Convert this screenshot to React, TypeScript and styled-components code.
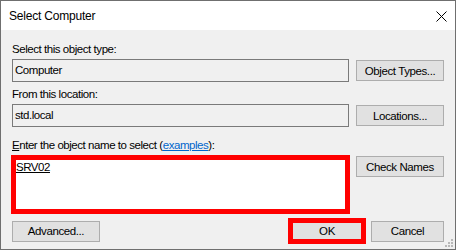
import React from 'react';
import styled, { createGlobalStyle } from 'styled-components';

const GlobalStyle = createGlobalStyle`
  html, body {
    margin: 0;
    padding: 0;
    background: #ffffff;
  }
  body {
    font-family: "Liberation Sans", Arial, sans-serif;
    font-size: 11.5px;
    color: #000;
  }
`;

const App: React.FC = () => {
  return (
    <>
      <GlobalStyle />
      <Window>
        <TitleBar>
          <Title>Select Computer</Title>
          <CloseGlyph width="11" height="11" viewBox="0 0 11 11">
            <path d="M0.5 0.5 L10.5 10.5 M10.5 0.5 L0.5 10.5" stroke="#000" strokeWidth="1" fill="none" />
          </CloseGlyph>
        </TitleBar>

        <Body>
          <Label $top={12}>Select this object type:</Label>
          <Row>
            <TextBox>Computer</TextBox>
            <Button>Object Types...</Button>
          </Row>

          <Label $top={5}>From this location:</Label>
          <Row>
            <TextBox>std.local</TextBox>
            <Button>Locations...</Button>
          </Row>

          <Label $top={11}>
            <u>E</u>nter the object name to select (<Link>examples</Link>):
          </Label>
          <Row $top>
            <NameBox>
              <NameText>SRV02</NameText>
            </NameBox>
            <Button $nudge>Check Names</Button>
          </Row>

          <Footer>
            <Button>Advanced...</Button>
            <FooterRight>
              <Highlight>
                <OkButton>OK</OkButton>
              </Highlight>
              <Button $width={73}>Cancel</Button>
            </FooterRight>
          </Footer>

          <Grip width="9" height="9" viewBox="0 0 9 9">
            <rect x="6" y="0" width="2" height="2" fill="#b8b8b8" />
            <rect x="3" y="3" width="2" height="2" fill="#b8b8b8" />
            <rect x="6" y="3" width="2" height="2" fill="#b8b8b8" />
            <rect x="0" y="6" width="2" height="2" fill="#b8b8b8" />
            <rect x="3" y="6" width="2" height="2" fill="#b8b8b8" />
            <rect x="6" y="6" width="2" height="2" fill="#b8b8b8" />
          </Grip>
        </Body>
      </Window>
    </>
  );
};

const Window = styled.div`
  width: 456px;
  height: 250px;
  box-sizing: border-box;
  border: 1px solid #6f6f6f;
  display: flex;
  flex-direction: column;
  background: #f0f0f0;
`;

const TitleBar = styled.div`
  height: 29px;
  background: #ffffff;
  display: flex;
  align-items: center;
  justify-content: space-between;
  padding: 0 8px 0 8px;
  flex-shrink: 0;
`;

const Title = styled.span`
  font-size: 12px;
  letter-spacing: -0.2px;
  margin-top: 1px;
`;

const CloseGlyph = styled.svg`
  display: block;
  margin-top: 1px;
`;

const Body = styled.div`
  position: relative;
  flex: 1;
  padding: 0 11px;
  display: flex;
  flex-direction: column;
`;

const Label = styled.div<{ $top: number }>`
  margin-top: ${(p) => p.$top}px;
  height: 15px;
  line-height: 15px;
  margin-bottom: 2px;
  letter-spacing: -0.45px;
  white-space: nowrap;
`;

const Link = styled.span`
  color: #0066cc;
  text-decoration: underline;
`;

const Row = styled.div<{ $top?: boolean }>`
  display: grid;
  grid-template-columns: 337px 88px;
  column-gap: 7px;
  align-items: ${(p) => (p.$top ? 'start' : 'center')};
`;

const TextBox = styled.div`
  height: 23px;
  box-sizing: border-box;
  border: 1px solid #7a7a7a;
  background: #f0f0f0;
  padding: 0 2px;
  line-height: 21px;
  letter-spacing: -0.45px;
`;

const NameBox = styled.div`
  height: 59px;
  margin: 0 -1px;
  box-sizing: border-box;
  border: 5px solid #ff0000;
  background: #ffffff;
`;

const NameText = styled.span`
  display: inline-block;
  line-height: 15px;
  text-decoration: underline;
  letter-spacing: -0.45px;
`;

const Button = styled.div<{ $width?: number; $nudge?: boolean }>`
  width: ${(p) => p.$width ?? 88}px;
  height: 21px;
  box-sizing: border-box;
  border: 1px solid #adadad;
  background: #e1e1e1;
  display: flex;
  align-items: center;
  justify-content: center;
  letter-spacing: -0.4px;
  margin-top: ${(p) => (p.$nudge ? 1 : 0)}px;
  white-space: nowrap;
`;

const Footer = styled.div`
  margin-top: 4px;
  display: flex;
  align-items: center;
  justify-content: space-between;
`;

const FooterRight = styled.div`
  display: flex;
  align-items: center;
  gap: 5px;
`;

const Highlight = styled.div`
  width: 78px;
  height: 26px;
  box-sizing: border-box;
  border: 5px solid #ff0000;
  background: #e1e1e1;
  display: flex;
`;

const OkButton = styled.div`
  flex: 1;
  display: flex;
  align-items: center;
  justify-content: center;
  letter-spacing: -0.3px;
`;

const Grip = styled.svg`
  position: absolute;
  right: 1px;
  bottom: 1px;
  display: block;
`;

export default App;
